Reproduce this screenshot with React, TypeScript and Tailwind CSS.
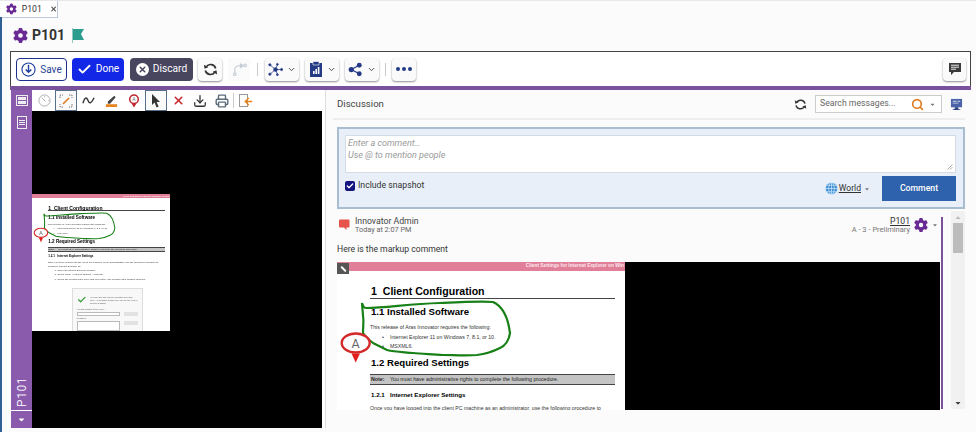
import { ChevronDown, Check, X, Download, Printer, Search, ArrowLeft } from "lucide-react";
import { FaGear } from "react-icons/fa6";
import { FaCaretDown } from "react-icons/fa";

function Sync({ className = "w-4 h-4" }: { className?: string }) {
  return (
    <svg viewBox="0 0 16 16" className={className} fill="none" stroke="#333" strokeWidth="1.8">
      <path d="M13.5 7a5.6 5.6 0 0 0-10-2" />
      <path d="M2.5 9a5.6 5.6 0 0 0 10 2" />
      <path d="M1 2.8l.6 4.4 4-1.6z" fill="#333" stroke="none" />
      <path d="M15 13.2l-.6-4.4-4 1.6z" fill="#333" stroke="none" />
    </svg>
  );
}

function ToolButton({ children, className = "" }: { children: React.ReactNode; className?: string }) {
  return (
    <button className={"h-[23px] flex items-center justify-center gap-1 bg-[#fafafa] rounded-sm shadow-[0_1px_2px_rgba(0,0,0,0.45)] " + className}>
      {children}
    </button>
  );
}

function Ink() {
  return (
    <svg viewBox="0 0 288 148" className="absolute left-0 top-0 w-[288px] h-[148px]" fill="none">
      <path
        d="M25 41C26 44 27 46 29 46C50 46 70 42 103 41C125 40 145 39 156 40C165 44 171 55 173 71C172 78 168 84 163 86C155 90 148 92 140 93C128 94 116 93 106 93C95 92 85 92 76 91C66 90 58 90 50 88C44 85 40 83 36 81C31 77 28 74 26 71C26 64 27 58 26 54C26 49 25 45 25 41Z"
        stroke="#178017"
        strokeWidth="2.2"
      />
      <ellipse cx="18.7" cy="81" rx="14" ry="9.5" fill="#fff" stroke="#d42a2a" strokeWidth="2.4" />
      <path d="M14.5 91.5h8.5l-4.3 9z" fill="#e01f1f" />
      <text x="18.7" y="85.5" textAnchor="middle" fontSize="12.5" fill="#666" fontFamily="Roboto, sans-serif">A</text>
    </svg>
  );
}

function DocPage({ height }: { height: string }) {
  return (
    <div className={"relative w-[288px] bg-white overflow-hidden font-['Liberation_Sans',sans-serif] text-black " + height}>
      <div className="h-[9px] bg-[#e17f98] flex items-center justify-end overflow-hidden whitespace-nowrap">
        <span className="text-[4.8px] font-bold text-[#fbe9ee] leading-none pr-px">Client Settings for Internet Explorer on Win</span>
      </div>
      <div className="pl-[33px] pr-[10px]">
        <div className="mt-[14px] text-[10.6px] leading-[13px] font-bold border-b border-[#444] pl-[1px] h-[14px]">1&nbsp;&nbsp;Client Configuration</div>
        <div className="mt-[7px] text-[9.6px] leading-[12px] font-bold pl-[1px]">1.1 Installed Software</div>
        <div className="mt-[5px] text-[5.2px] leading-[9px] text-[#333]">This release of Aras Innovator requires the following:</div>
        <div className="mt-[0.5px] text-[5.2px] leading-[9px] text-[#333]">
          <div className="flex"><span className="w-[20px] pl-[12px]">•</span>Internet Explorer 11 on Windows 7, 8.1, or 10.</div>
          <div className="flex"><span className="w-[20px] pl-[12px]">•</span>MSXML6.</div>
        </div>
        <div className="mt-[6.5px] text-[9.6px] leading-[12px] font-bold pl-[1px]">1.2 Required Settings</div>
        <div className="mt-[5px] h-[11px] bg-[#c4c4c4] border-y border-[#444] flex items-center text-[5.25px] text-[#222] whitespace-nowrap">
          <span className="font-bold w-[20px] pl-[1px]">Note:</span>You must have administrative rights to complete the following procedure.
        </div>
        <div className="mt-[5.5px] text-[6.2px] leading-[8px] font-bold pl-[1px]">1.2.1&nbsp;&nbsp;&nbsp;Internet Explorer Settings</div>
        <div className="mt-[5.5px] text-[5.2px] leading-[8px] text-[#333]">
          Once you have logged into the client PC machine as an administrator, use the following procedure to configure Internet Explorer 11:
        </div>
        <ol className="text-[5.2px] leading-[9px] text-[#333] list-decimal pl-[20px]">
          <li>Open an Internet Explorer window.</li>
          <li>Select Tools &gt; Internet Options &gt; Security.</li>
          <li>Select the Trusted sites zone and click Sites. The Trusted sites window appears.</li>
        </ol>
        <div className="mt-[12px] ml-[50px] w-[149px] h-[92px] border border-[#ddd] bg-[#f8f8f8] px-[8px] pt-[14px] text-[4.6px] text-[#555]">
          <div className="flex items-center gap-2">
            <Check className="w-5 h-5 text-[#3a9a3a] shrink-0" strokeWidth={3} />
            <span className="flex-1 leading-[6px]">You can add and remove websites from this zone. All websites in this zone will use the zone's security settings.</span>
          </div>
          <div className="mt-[6px]">Add this website to the zone:</div>
          <div className="flex gap-2 mt-[1px]">
            <div className="flex-1 h-[9px] border border-[#bbb] bg-white" />
            <div className="w-[30px] h-[9px] bg-[#e2e2e2]" />
          </div>
          <div className="mt-[3px]">Websites:</div>
          <div className="flex gap-2 mt-[1px]">
            <div className="flex-1 h-[20px] border border-[#bbb] bg-white" />
            <div className="w-[30px] h-[9px] bg-[#e2e2e2]" />
          </div>
        </div>
      </div>
      <Ink />
    </div>
  );
}

function Separator() {
  return <div className="w-px h-[13px] bg-[#c9c9c9] mx-[3px]" />;
}

export default function App() {
  return (
    <div className="w-[976px] h-[432px] overflow-hidden bg-[#fbfbfb] flex flex-col font-['Roboto',sans-serif] text-[#333]">
      <div className="h-[17px] flex border-t border-[#e8e8e8] shrink-0">
        <div className="ml-px w-[57px] h-[17px] bg-white border-r border-b border-[#b9c8dc] flex items-center pl-[5px] gap-[5px]">
          <FaGear className="w-[12px] h-[12px] text-[#6a2a94]" />
          <span className="text-[8.6px] text-[#333]">P101</span>
          <X className="w-[8px] h-[8px] ml-[3px] text-[#555]" strokeWidth={4} />
        </div>
      </div>

      <div className="flex-1 min-h-0 border-l-2 border-[#2f6194] flex flex-col pl-[8px] pr-[5px]">
        <div className="h-[34px] flex items-center shrink-0 pl-[3px] pt-[3px]">
          <FaGear className="w-[15px] h-[15px] text-[#6a2a94]" />
          <span className="ml-[4px] text-[14px] font-bold text-[#333]">P101</span>
          <svg viewBox="0 0 14 15" className="ml-[6px] w-[14px] h-[15px]">
            <path d="M1 0h1v15H1z" fill="#8fc9c0" />
            <path d="M2 1h11l-3 5 3 6H2z" fill="#2a9d8f" />
          </svg>
        </div>

        <div className="h-[35px] shrink-0 bg-white border-t border-x border-[#444] flex items-center pl-[5px] pr-[4px]">
          <button className="w-[51px] h-[23px] flex items-center justify-center gap-[4px] bg-white border border-[#1c2f8c] rounded-sm text-[10px] text-[#2a3f95]">
            <svg viewBox="0 0 16 16" className="w-[15px] h-[15px]" fill="none" stroke="#1c3fa0" strokeWidth="1.2">
              <circle cx="8" cy="8" r="7" />
              <path d="M8 3v8M5 8l3 3 3-3" strokeWidth="1.5" />
            </svg>
            Save
          </button>
          <button className="ml-[5px] w-[52px] h-[23px] flex items-center justify-center gap-[4px] bg-[#1228e6] rounded-sm text-[10.2px] text-white">
            <Check className="w-[15px] h-[15px]" strokeWidth={3} />
            Done
          </button>
          <button className="ml-[6px] w-[63px] h-[23px] flex items-center justify-center gap-[4px] bg-[#48465f] rounded-sm text-[10.2px] text-white">
            <span className="w-[13px] h-[13px] rounded-full bg-white flex items-center justify-center">
              <X className="w-[9px] h-[9px] text-[#48465f]" strokeWidth={4} />
            </span>
            Discard
          </button>
          <ToolButton className="ml-[5px] w-[24px]"><Sync className="w-[15px] h-[15px]" /></ToolButton>
          <button className="ml-[6px] w-[22px] h-[23px] flex items-center justify-center bg-[#fbfbfb]">
            <svg viewBox="0 0 16 16" className="w-[15px] h-[15px]" fill="none" stroke="#c4ccd4" strokeWidth="1.2">
              <path d="M3 11V8a4 4 0 0 1 4-4h3" />
              <path d="M9 2l3 2-3 2z" fill="#c4ccd4" />
              <circle cx="3" cy="13" r="1.4" />
              <circle cx="14" cy="3.5" r="1.4" />
            </svg>
          </button>
          <div className="mx-[4px]"><Separator /></div>
          <ToolButton className="w-[34px]">
            <svg viewBox="0 0 16 16" className="w-[15px] h-[15px]" fill="#243a85" stroke="#243a85" strokeWidth="0.8">
              <path d="M8 8L2 3M8 8l-6 5M8 8l2-5M8 8l2 5M8 8h6" fill="none" />
              <circle cx="8" cy="8" r="2" />
              <circle cx="2" cy="3" r="1.2" />
              <circle cx="2" cy="13" r="1.2" />
              <circle cx="10" cy="2.5" r="1" />
              <circle cx="10" cy="13.5" r="1" />
              <circle cx="14.5" cy="8" r="1.2" />
            </svg>
            <ChevronDown className="w-[9px] h-[9px] text-[#444]" strokeWidth={2.5} />
          </ToolButton>
          <ToolButton className="ml-[6px] w-[34px]">
            <svg viewBox="0 0 14 16" className="w-[14px] h-[16px]">
              <path d="M1 2h12v14H1z" fill="#243a85" />
              <path d="M4 0.5h6V4H4z" fill="#243a85" stroke="#fff" strokeWidth="0.6" />
              <path d="M4 10h1.6v3H4zM6.4 8h1.6v5H6.4zM8.8 6h1.6v7H8.8z" fill="#fff" />
            </svg>
            <ChevronDown className="w-[9px] h-[9px] text-[#444]" strokeWidth={2.5} />
          </ToolButton>
          <ToolButton className="ml-[6px] w-[34px]">
            <svg viewBox="0 0 16 16" className="w-[15px] h-[15px]" fill="#243a85" stroke="#243a85">
              <path d="M3.5 8L12 3.5M3.5 8l8.5 4.5" fill="none" strokeWidth="1.3" />
              <circle cx="3.5" cy="8" r="2.8" stroke="none" />
              <circle cx="12" cy="3.5" r="2.6" stroke="none" />
              <circle cx="12" cy="12.5" r="2.6" stroke="none" />
            </svg>
            <ChevronDown className="w-[9px] h-[9px] text-[#444]" strokeWidth={2.5} />
          </ToolButton>
          <div className="mx-[3px]"><Separator /></div>
          <ToolButton className="w-[24px] gap-[2px]">
            <span className="w-[4px] h-[4px] rounded-full bg-[#243a85]" />
            <span className="w-[4px] h-[4px] rounded-full bg-[#243a85]" />
            <span className="w-[4px] h-[4px] rounded-full bg-[#243a85]" />
          </ToolButton>
          <ToolButton className="ml-auto w-[23px]">
            <svg viewBox="0 0 14 14" className="w-[14px] h-[14px]">
              <path d="M1 1h12v9H6l-3 3v-3H1z" fill="#3a3a3a" />
              <path d="M3 3.2h8M3 5.2h8M3 7.2h5" stroke="#fff" strokeWidth="0.9" />
            </svg>
          </ToolButton>
        </div>
        <div className="h-[4px] shrink-0 bg-[#7a529c]" />

        <div className="flex-1 min-h-0 flex">
          <div className="w-[21px] ml-px mb-[4px] bg-[#8a5aac] flex flex-col items-center shrink-0 text-white">
            <div className="mt-[5px] w-[12px] h-[11px] border border-[#eee] flex flex-col justify-center gap-px px-px">
              <div className="h-[3px] bg-[#eee]" />
              <div className="h-[3px] bg-[#eee]" />
            </div>
            <div className="mt-[10px] w-[10px] h-[13px] border border-[#eee] flex flex-col justify-center gap-px px-px">
              <div className="h-px bg-[#eee]" />
              <div className="h-px bg-[#eee]" />
              <div className="h-px bg-[#eee]" />
            </div>
            <div className="mt-auto h-[36px] flex items-center justify-center">
              <span className="text-[12px] -rotate-90 tracking-[0.5px] whitespace-nowrap text-[#f2eaf6]">P101</span>
            </div>
            <div className="w-full h-[18px] border-t border-white flex items-center justify-center">
              <FaCaretDown className="w-[9px] h-[9px] text-white" />
            </div>
          </div>

          <div className="w-[294px] shrink-0 mb-[4px] flex flex-col bg-white border-r border-[#dddddd]">
            <div className="h-[21px] shrink-0 flex items-center pl-[1px]">
              <div className="w-[22px] flex justify-center">
                <svg viewBox="0 0 14 14" className="w-[13px] h-[13px]" fill="none" stroke="#aaa" strokeWidth="1">
                  <circle cx="7" cy="7" r="6" />
                  <path d="M4 4l4 4M7 2.5v1M11 7h1" />
                </svg>
              </div>
              <div className="w-[22px] h-[21px] bg-[#fafafa] border border-[#54708a] flex items-center justify-center">
                <svg viewBox="0 0 14 14" className="w-[14px] h-[14px]" fill="none">
                  <path d="M4 10l6-6" stroke="#e07b1f" strokeWidth="1.6" />
                  <path d="M1 4V1h3M10 1h3v3M13 10v3h-3M4 13H1v-3" stroke="#666" strokeWidth="0.9" strokeDasharray="1.5 1" />
                </svg>
              </div>
              <div className="w-[23px] flex justify-center">
                <svg viewBox="0 0 14 14" className="w-[13px] h-[13px]" fill="none" stroke="#333" strokeWidth="1.5">
                  <path d="M1 10C3 3 5 3 6.5 7S10 10 13 4" />
                </svg>
              </div>
              <div className="w-[23px] flex justify-center">
                <svg viewBox="0 0 14 14" className="w-[13px] h-[13px]">
                  <path d="M3 8l7-6 1.5 1.5-6 7H3z" fill="#444" />
                  <path d="M1 11h12v3H1z" fill="#e8851f" />
                </svg>
              </div>
              <div className="w-[21px] flex justify-center">
                <svg viewBox="0 0 14 16" className="w-[12px] h-[14px]">
                  <circle cx="7" cy="6" r="5" fill="#fff" stroke="#c2272d" strokeWidth="1.8" />
                  <path d="M4 10.5h6L7 15.5z" fill="#c2272d" />
                  <text x="7" y="8.2" textAnchor="middle" fontSize="6" fill="#666">A</text>
                </svg>
              </div>
              <div className="ml-px w-[22px] h-[21px] bg-[#fafafa] border border-[#54708a] flex items-center justify-center">
                <svg viewBox="0 0 10 14" className="w-[10px] h-[14px]">
                  <path d="M1 0v11l2.6-2.4L5.6 13.4l2-.9-2-4.6H9z" fill="#333" />
                </svg>
              </div>
              <div className="w-[22px] flex justify-center"><X className="w-[13px] h-[13px] text-[#c8282d]" strokeWidth={3} /></div>
              <div className="w-[22px] flex justify-center"><Download className="w-[14px] h-[14px] text-[#333]" strokeWidth={2.2} /></div>
              <div className="w-[22px] flex justify-center"><Printer className="w-[14px] h-[14px] text-[#5a6b7a]" strokeWidth={2.4} /></div>
              <div className="w-px h-[15px] bg-[#ccc]" />
              <div className="ml-[5px] flex items-center relative w-[16px] h-[14px]">
                <div className="w-[9px] h-[13px] border border-[#999]" />
                <ArrowLeft className="absolute left-[4px] top-[2px] w-[11px] h-[11px] text-[#e8851f]" strokeWidth={3} />
              </div>
            </div>
            <div className="flex-1 min-h-0 w-[290px] bg-black flex items-center">
              <div className="w-[138px] h-[138px] overflow-hidden mb-[14px] blur-[0.3px]">
                <div className="[zoom:0.479]">
                  <DocPage height="h-[288px]" />
                </div>
              </div>
            </div>
          </div>

          <div className="flex-1 min-w-0 flex flex-col mb-[4px] ml-[11px]">
            <div className="h-[28px] shrink-0 flex items-center">
              <span className="text-[9.6px] text-[#444]">Discussion</span>
              <Sync className="ml-auto w-[13px] h-[13px]" />
              <div className="ml-[8px] w-[127px] h-[18px] bg-white border border-[#ccc] flex items-center pl-[4px] pr-[5px]">
                <span className="text-[8.7px] text-[#666]">Search messages...</span>
                <Search className="ml-auto w-[13px] h-[13px] text-[#e07b1f]" strokeWidth={3} />
                <FaCaretDown className="ml-[5px] w-[7px] h-[7px] text-[#777]" />
              </div>
              <svg viewBox="0 0 14 14" className="ml-[8px] mr-[8px] w-[13px] h-[13px]">
                <path d="M1 1h12v9H1z" fill="#4a63a8" />
                <path d="M3 3h4v1H3zM3 5h6v1H3zM8 3h3v1H8z" fill="#d5dcec" />
                <path d="M5 10h4v2h2v1H3v-1h2z" fill="#2d4380" />
              </svg>
            </div>
            <div className="h-[2px] shrink-0 bg-[#eeeeee] mb-[7px] mr-[6px] -ml-[4px]" />

            <div className="h-[82px] shrink-0 mr-[6px] bg-[#e8eff8] border-2 border-[#a9bdd0] pl-[6px] pr-[7px] pt-[6px] flex flex-col">
              <div className="relative h-[38px] shrink-0 bg-white border border-[#d5dbe3] px-[2px] pt-[1px] text-[9px] leading-[12px] italic text-[#9a9a9a]">
                <div>Enter a comment…</div>
                <div>Use @ to mention people</div>
                <svg viewBox="0 0 6 6" className="absolute right-[2px] bottom-[2px] w-[6px] h-[6px]" stroke="#999" strokeWidth="0.8">
                  <path d="M5.5 0.5l-5 5M5.5 3l-2.5 2.5" />
                </svg>
              </div>
              <div className="flex mt-[3px]">
                <label className="flex items-center gap-[3px] h-[20px] self-start">
                  <span className="w-[10px] h-[10px] rounded-[2px] bg-[#14147e] flex items-center justify-center">
                    <Check className="w-[8px] h-[8px] text-white" strokeWidth={4} />
                  </span>
                  <span className="text-[8.7px] text-[#333]">Include snapshot</span>
                </label>
                <div className="ml-auto flex items-center h-[25px] pr-[12px]">
                  <svg viewBox="0 0 14 14" className="w-[13px] h-[13px]" fill="#3f8fd2" stroke="#dcefff" strokeWidth="0.7">
                    <circle cx="7" cy="7" r="6.5" />
                    <path d="M0.5 7h13M7 .5v13M2 3.5h10M2 10.5h10" fill="none" />
                    <ellipse cx="7" cy="7" rx="3" ry="6.5" fill="none" />
                  </svg>
                  <span className="ml-px text-[8.6px] underline text-[#333]">World</span>
                  <FaCaretDown className="ml-[3px] w-[6px] h-[6px] text-[#777]" />
                </div>
                <button className="w-[74px] h-[25px] bg-[#2f62ac] text-white text-[8.7px] font-medium">Comment</button>
              </div>
            </div>

            <div className="flex-1 min-h-0 flex mr-[6px] mt-[2px]">
              <div className="flex-1 min-w-0 flex flex-col pt-[6px]">
                <div className="flex h-[23px] shrink-0 pr-[3px]">
                  <svg viewBox="0 0 12 12" className="w-[12px] h-[12px] mt-[2px] ml-px">
                    <path d="M1 1.5Q1 .5 2 .5h8.5Q11.5 .5 11.5 1.5v6Q11.5 8.5 10.5 8.5H8.5V11L6 8.5H2Q1 8.5 1 7.5z" fill="#e5534b" />
                  </svg>
                  <div className="ml-[5px] leading-none -mt-px">
                    <div className="text-[8.7px] leading-[10px] text-[#444]">Innovator Admin</div>
                    <div className="text-[7.3px] leading-[8px] text-[#666]">Today at 2:07 PM</div>
                  </div>
                  <div className="ml-auto flex -mt-px">
                    <div className="text-right">
                      <div className="text-[8.6px] leading-[10px] underline text-[#333]">P101</div>
                      <div className="text-[7.5px] leading-[8px] text-[#777]">A - 3 - Preliminary</div>
                    </div>
                    <FaGear className="ml-[4px] mt-[2px] w-[14px] h-[14px] text-[#6a2a94]" />
                    <FaCaretDown className="ml-[4px] mt-[6px] w-[6px] h-[6px] text-[#777]" />
                  </div>
                </div>
                <div className="text-[8.6px] leading-[14px] text-[#333] mt-[2px]">Here is the markup comment</div>
                <div className="relative mt-[6px] flex h-[148px] shrink-0 bg-black mr-[1px]">
                  <DocPage height="h-[148px]" />
                  <div className="absolute left-0 top-px w-[12px] h-[11px] bg-[#555] flex items-center justify-center">
                    <div className="w-[7px] h-[2px] bg-white rotate-45 rounded-full" />
                  </div>
                </div>
              </div>
              <div className="w-[2px] shrink-0 bg-[#7a529c] mt-[6px] h-[192px]" />
              <div className="ml-[8px] w-[14px] shrink-0 h-[198px] bg-[#f1f1f1] flex flex-col items-center">
                <FaCaretDown className="mt-[3px] w-[8px] h-[8px] text-[#bbb] rotate-180" />
                <div className="mt-[1px] w-[10px] h-[30px] bg-[#bcbcbc]" />
                <FaCaretDown className="mt-auto mb-[2px] w-[8px] h-[8px] text-[#444]" />
              </div>
            </div>
          </div>
        </div>
      </div>
    </div>
  );
}
